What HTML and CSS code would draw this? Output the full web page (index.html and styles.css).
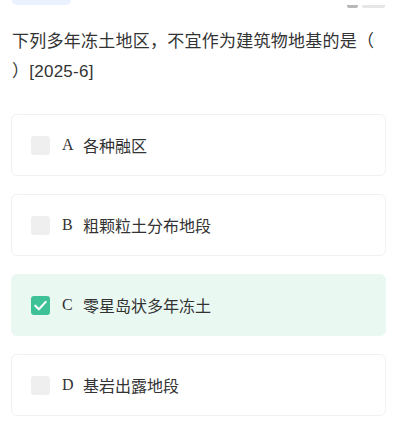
FILE: index.html
```html
<!DOCTYPE html>
<html lang="zh-CN">
<head>
<meta charset="utf-8">
<link rel="stylesheet" href="styles.css">
</head>
<body>
<div class="page">
  <div class="header">
    <div class="pill"></div>
    <div class="tools"><span class="tool"></span><span class="tool light"></span></div>
  </div>
  <p class="question">下列多年冻土地区，不宜作为建筑物地基的是（ ）[2025-6]</p>
  <div class="options">
    <div class="option">
      <span class="box"></span><span class="letter">A</span><span class="text">各种融区</span>
    </div>
    <div class="option">
      <span class="box"></span><span class="letter">B</span><span class="text">粗颗粒土分布地段</span>
    </div>
    <div class="option selected">
      <span class="box checked"><svg viewBox="0 0 20 20" width="19" height="19"><path d="M4.5 10.2 L8.3 14 L15.5 6.2" fill="none" stroke="#fff" stroke-width="2.2" stroke-linecap="round" stroke-linejoin="round"/></svg></span><span class="letter">C</span><span class="text">零星岛状多年冻土</span>
    </div>
    <div class="option">
      <span class="box"></span><span class="letter">D</span><span class="text">基岩出露地段</span>
    </div>
  </div>
</div>
</body>
</html>
```

FILE: styles.css
```css
html, body {
  margin: 0;
  padding: 0;
  background: #ffffff;
  overflow: hidden;
}
.page {
  padding: 0 17px 0 11px;
  font-family: "Liberation Sans", "Noto Sans CJK SC", sans-serif;
  color: #333333;
}
.header {
  display: flex;
  justify-content: space-between;
  align-items: flex-end;
  height: 24px;
  margin-top: -19px;
}
.pill {
  width: 59px;
  height: 24px;
  margin-left: 1px;
  background: #e9f2fe;
  border-radius: 5px;
}
.tools {
  display: flex;
  gap: 4px;
  margin-right: 1px;
  align-items: flex-start;
  height: 22px;
}
.tool {
  width: 11px;
  height: 22px;
  border-bottom: 3px solid #b8b8b8;
  border-radius: 0 0 2px 2px;
}
.tool.light {
  width: 23px;
  border-bottom-color: #e6e6e6;
}
.question {
  margin: 22px 0 0 1px;
  font-size: 17px;
  line-height: 30px;
  color: #333333;
  text-spacing-trim: space-all;
  letter-spacing: 0.25px;
}
.options {
  margin-top: 27px;
  display: flex;
  flex-direction: column;
  gap: 18px;
}
.option {
  height: 62px;
  box-sizing: border-box;
  border: 1px solid #f1f1f1;
  border-radius: 6px;
  display: flex;
  align-items: center;
  padding-left: 19px;
  background: #ffffff;
}
.option.selected {
  background: #eaf8f2;
  border-color: #eaf8f2;
}
.box {
  width: 19px;
  height: 19px;
  border-radius: 3px;
  background: #efefef;
  flex: none;
  display: flex;
  align-items: center;
  justify-content: center;
}
.box.checked {
  background: #3fc198;
}
.letter {
  font-family: "Liberation Serif", "Noto Sans CJK SC", serif;
  font-size: 16px;
  margin-left: 12px;
  width: 21px;
  color: #333333;
}
.text {
  font-family: "Noto Sans CJK SC", sans-serif;
  font-size: 16px;
  color: #333333;
}
```
